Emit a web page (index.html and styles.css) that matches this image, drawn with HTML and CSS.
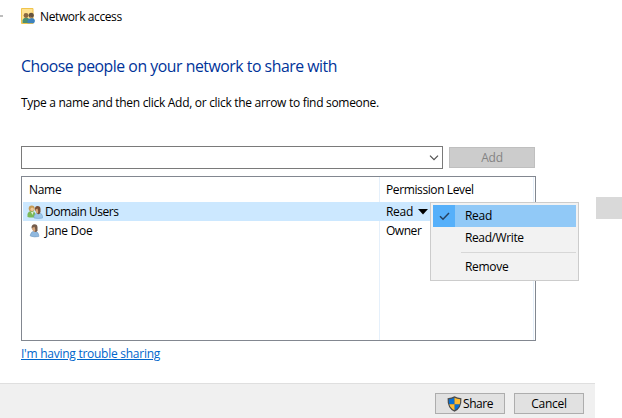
FILE: index.html
```html
<!DOCTYPE html>
<html lang="en">
<head>
<meta charset="utf-8">
<title>Network access</title>
<link rel="stylesheet" href="styles.css">
</head>
<body>
<div class="edge-dash"></div>
<div class="edge-block"></div>
<main class="window">
  <header class="titlebar">
    <svg class="title-icon" width="15" height="16" viewBox="0 0 15 16">
      <path d="M.5.5h11.500v15H.5z" fill="#ffe291" stroke="#f0c44c"/>
      <path d="M1.500 15v-3q1-2.500 3.500-2.500 3 0 3.500 3V15z" fill="#4c8f70"/>
      <circle cx="5" cy="7.500" r="2.400" fill="#8b6840"/>
      <path d="M6.500 15.200v-2.500q1-2.700 4-2.700t3.500 3l-1 2.200z" fill="#3d82bd"/>
      <circle cx="10.200" cy="7.300" r="2.600" fill="#65523d"/>
      <path d="M8.500 7.500q1 2 2.500 1.500l-1 1.500z" fill="#c99a6b"/>
    </svg>
    <span class="snug">Network access</span>
  </header>
  <section class="content">
    <h1>Choose people on your network to share with</h1>
    <p>Type a name and then click Add, or click the arrow to find someone.</p>
    <div class="entry">
      <div class="combo">
        <svg width="10" height="6" viewBox="0 0 10 6"><path d="M1 .7l4 4 4-4" fill="none" stroke="#505050" stroke-width="1.200"/></svg>
      </div>
      <div class="button add"><span>Add</span></div>
    </div>
    <div class="list">
      <div class="row head">
        <div class="name"><span>Name</span></div>
        <div class="perm"><span class="snug">Permission Level</span></div>
      </div>
      <div class="row selected">
        <div class="name">
          <svg class="user" width="16" height="14" viewBox="0 0 16 14">
            <path d="M.5 12V9q1-3 4-3t4 3v3q-4 1-8 0z" fill="#79b957"/>
            <path d="M4 7h2.500L5.500 10z" fill="#e5efdc"/>
            <circle cx="4.700" cy="3.600" r="3" fill="#c69b56"/>
            <circle cx="5.200" cy="4.200" r="1.700" fill="#edc99c"/>
            <path d="M7 13v-2q1-3 4.500-3t4 3v2q-4 1-8.500 0z" fill="#9bc6e9" stroke="#6f9fc8" stroke-width=".5"/>
            <path d="M8 5q-.5-4 2.500-4t3 3v3q-1 3-3 2z" fill="#7a5038"/>
            <path d="M8.500 4.500l2-1 .7 2.500-.2 2q-2 1-2.500-3.500z" fill="#dba878"/>
          </svg>
          <span class="snugger">Domain Users</span>
        </div>
        <div class="perm"><span>Read</span><svg class="arrow" width="10" height="6" viewBox="0 0 10 6"><path d="M0 0h10L5 5.500z"/></svg></div>
      </div>
      <div class="row">
        <div class="name">
          <svg class="user" width="16" height="14" viewBox="0 0 16 14">
            <path d="M3.300 12v-1q.7-3.500 4-4 4 .4 4.500 4v1.500q-4.500 1-8.500-.5z" fill="#91b9df" stroke="#6e9bc5" stroke-width=".6"/>
            <path d="M4.500 4q0-3.700 3-3.700t3 3.200v3q-1 2-3 1.500z" fill="#755c4b"/>
            <path d="M5 4l2.500-1.200.8 2.700-.3 2.300Q5.500 8 5 4z" fill="#d5a57b"/>
          </svg>
          <span>Jane Doe</span>
        </div>
        <div class="perm"><span class="snugger">Owner</span></div>
      </div>
      <div class="row filler"><div class="name"></div><div class="perm"></div></div>
    </div>
    <a class="help">I'm having trouble sharing</a>
  </section>
  <footer>
    <div class="button">
      <svg width="15" height="16" viewBox="0 0 14 15">
        <path d="M7 .3Q9.500 2 13.500 2q.5 9.500-6.500 12.700Q0 11.500.5 2 4.500 2 7 .3z" fill="#4b4b4b"/>
        <path d="M7 1.700v6H2.100Q1.500 6 1.700 3.100 4.600 3.100 7 1.700zM7 7.700h4.900Q10.800 11.500 7 13.400z" fill="#0870d2"/>
        <path d="M7 1.700v6h4.900q.6-1.700.4-4.600Q9.400 3.100 7 1.700zM7 7.700H2.100Q3.200 11.500 7 13.400z" fill="#fdbc32"/>
      </svg>
      <span class="snugger">Share</span>
    </div>
    <div class="button"><span>Cancel</span></div>
  </footer>
</main>
<div class="menu">
  <div class="item active">
    <div class="check"><svg width="11" height="9" viewBox="0 0 11 9"><path d="M1 4.300l3 3L10 1" fill="none" stroke="#26415f" stroke-width="1.500"/></svg></div>
    <span>Read</span>
  </div>
  <div class="item"><div class="check"></div><span class="snug">Read/Write</span></div>
  <div class="separator"></div>
  <div class="item"><div class="check"></div><span>Remove</span></div>
</div>
</body>
</html>
```
FILE: styles.css
```css
* { box-sizing: border-box; }
body {
  margin: 0;
  width: 622px;
  height: 418px;
  overflow: hidden;
  position: relative;
  background: #fff;
  color: #000;
  font: 12px/18px "Open Sans", "Noto Sans", sans-serif;
  letter-spacing: -0.3px;
}
svg { display: block; flex: none; }
span, h1, p, a { white-space: nowrap; }
.snug { letter-spacing: -0.39px; }
.snugger { letter-spacing: -0.46px; }
.window { width: 595px; height: 418px; display: flex; flex-direction: column; }
.titlebar { display: flex; padding: 8px 0 0 21px; height: 46px; }
.title-icon { margin-right: 4px; }
.content { padding: 0 59px 0 21px; height: 337px; }
h1 { margin: 8px 0 0; height: 24px; font-size: 15.8px; line-height: 24px; font-weight: 400; letter-spacing: -0.46px; color: #003399; }
p { margin: 16px 0 0; height: 18px; }
.entry { display: flex; gap: 6px; margin-top: 34px; height: 23px; align-items: center; }
.combo {
  width: 422px; height: 23px; border: 1px solid #7a7a7a;
  display: flex; align-items: center; justify-content: flex-end; padding-right: 3px;
}
.button {
  display: flex; align-items: center; justify-content: center; gap: 1px;
  width: 70px; height: 21px; background: #e1e1e1; border: 1px solid #adadad;
}
.add { width: 86px; background: #ccc; border-color: #bfbfbf; color: #838383; }
.list {
  width: 515px; height: 165px; margin-top: 7px; padding: 0 1px;
  border: 1px solid #828790; display: flex; flex-direction: column;
}
.row { display: flex; height: 19px; }
.name { width: 357px; padding-left: 4px; border-right: 1px solid #e5f0fb; display: flex; align-items: center; }
.perm { flex: 1; padding-left: 6px; border-right: 1px solid #e5f0fb; display: flex; align-items: center; }
.head { height: 25px; }
.head .name { padding-left: 6px; }
.selected { background: #cce8ff; }
.selected .name, .selected .perm { border-color: #cce8ff; }
.filler { flex: 1; }
.user { margin-right: 2px; }
.arrow { margin-left: 5px; }
.help { display: block; width: 139px; margin-top: 4px; color: #0066cc; letter-spacing: -0.26px; text-decoration: underline; text-underline-offset: 1px; }
footer {
  height: 35px; padding: 9px 11px 0 0; display: flex; justify-content: flex-end; gap: 9px;
  background: #f0f0f0; border-top: 1px solid #dfdfdf;
}
.menu {
  position: absolute; left: 430px; top: 202px; width: 149px; height: 79px;
  padding: 2px; border: 1px solid #ccc; background: #f2f2f2;
}
.item { display: flex; align-items: center; height: 22px; }
.active { background: #91c9f7; }
.check { width: 22px; height: 22px; margin-right: 10px; display: flex; align-items: center; justify-content: center; }
.active .check { background: #56b0fa; }
.separator { height: 1px; margin: 3px 0 3px 28px; background: #d7d7d7; }
.edge-dash { position: absolute; left: 0; top: 15px; width: 3px; height: 2px; background: #bdbdbd; }
.edge-block { position: absolute; left: 596px; top: 197px; width: 26px; height: 22px; background: #d9d9d9; }
```
